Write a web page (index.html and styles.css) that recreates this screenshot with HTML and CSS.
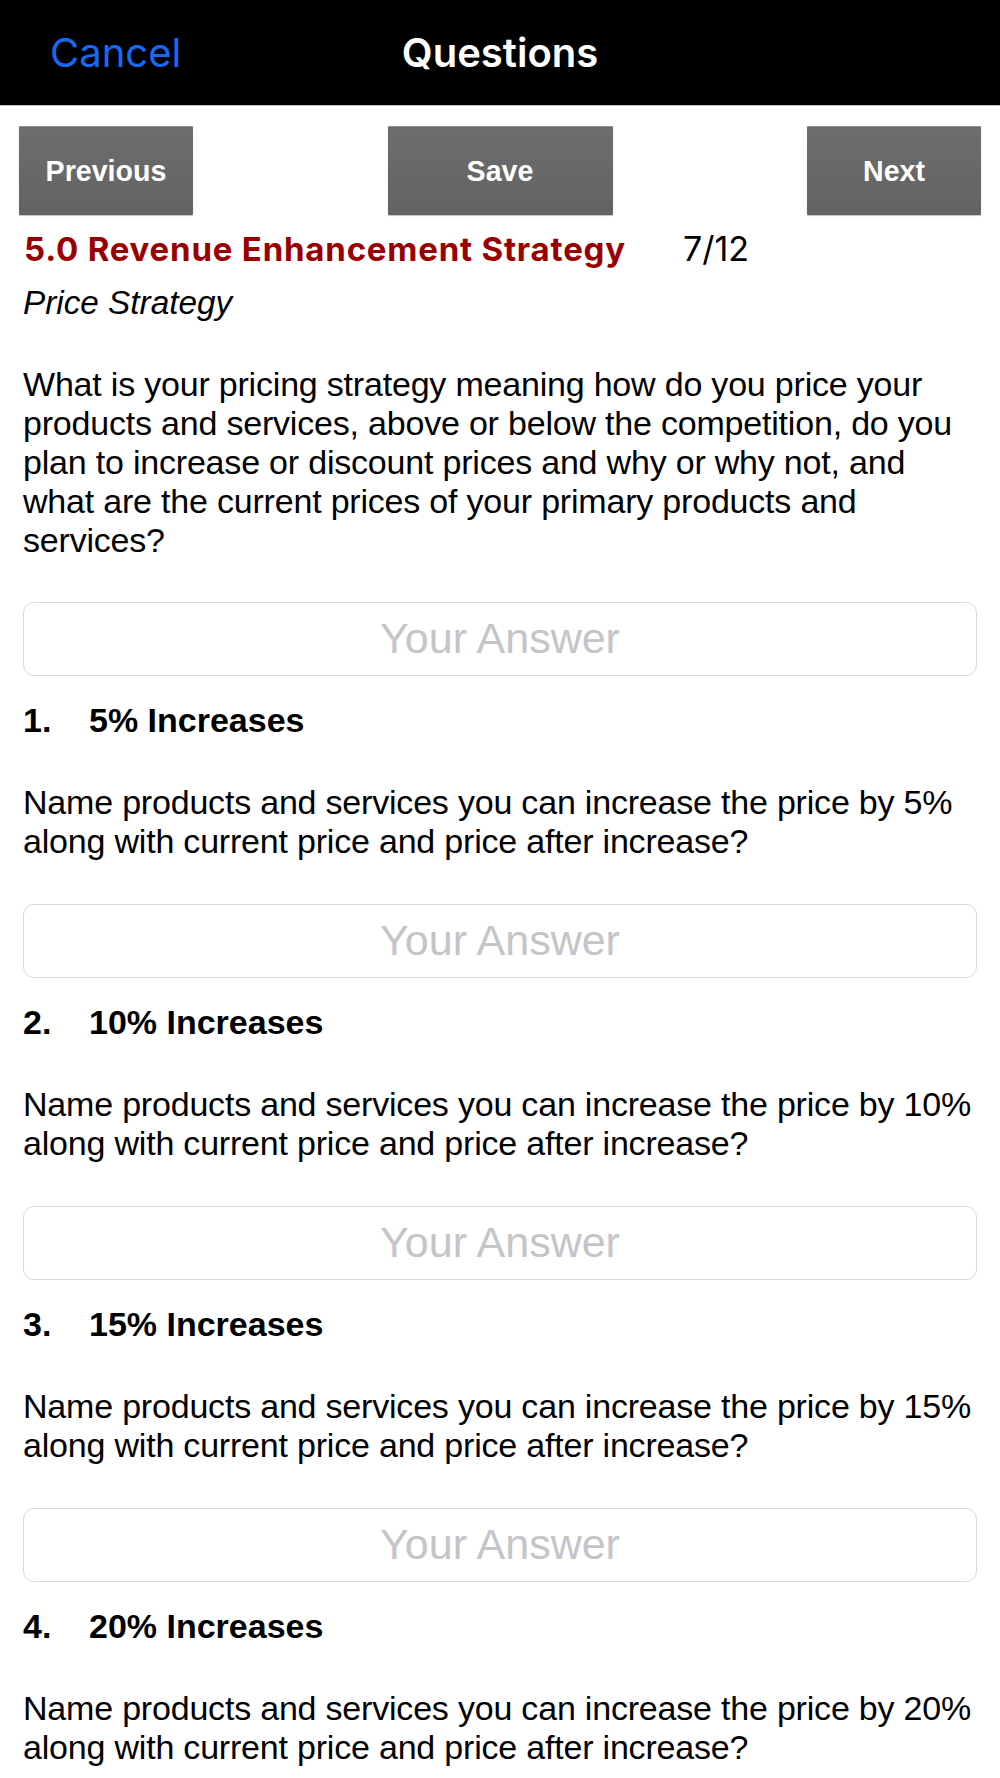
FILE: index.html
```html
<!DOCTYPE html>
<html lang="en">
<head>
<meta charset="utf-8">
<title>Questions</title>
<link rel="stylesheet" href="styles.css">
</head>
<body>
<header class="navbar">
  <a class="nav-cancel">Cancel</a>
  <h1 class="nav-title">Questions</h1>
</header>
<main class="page">
  <div class="toolbar">
    <button class="tool-btn tool-side">Previous</button>
    <button class="tool-btn tool-save">Save</button>
    <button class="tool-btn tool-side">Next</button>
  </div>
  <div class="section-row">
    <h2 class="section-title">5.0 Revenue Enhancement Strategy</h2>
    <span class="section-count">7/12</span>
  </div>
  <p class="subtitle">Price Strategy</p>
  <p class="question">What is your pricing strategy meaning how do you price your products and services, above or below the competition, do you plan to increase or discount prices and why or why not, and what are the current prices of your primary products and services?</p>
  <input class="answer" type="text" placeholder="Your Answer">

  <section class="item">
    <h3 class="item-head"><span class="item-num">1.</span>5% Increases</h3>
    <p class="item-desc">Name products and services you can increase the price by 5% along with current price and price after increase?</p>
    <input class="answer" type="text" placeholder="Your Answer">
  </section>
  <section class="item">
    <h3 class="item-head"><span class="item-num">2.</span>10% Increases</h3>
    <p class="item-desc">Name products and services you can increase the price by 10% along with current price and price after increase?</p>
    <input class="answer" type="text" placeholder="Your Answer">
  </section>
  <section class="item">
    <h3 class="item-head"><span class="item-num">3.</span>15% Increases</h3>
    <p class="item-desc">Name products and services you can increase the price by 15% along with current price and price after increase?</p>
    <input class="answer" type="text" placeholder="Your Answer">
  </section>
  <section class="item">
    <h3 class="item-head"><span class="item-num">4.</span>20% Increases</h3>
    <p class="item-desc">Name products and services you can increase the price by 20% along with current price and price after increase?</p>
    <input class="answer" type="text" placeholder="Your Answer">
  </section>
</main>
</body>
</html>
```
FILE: styles.css
```css
* { box-sizing: border-box; }

html, body {
  margin: 0;
  padding: 0;
  background: #ffffff;
}

body {
  font-family: "Liberation Sans", Arial, Helvetica, sans-serif;
  color: #000000;
  width: 1000px;
}

.navbar {
  height: 106px;
  background: #000000;
  border-bottom: 1px solid #c4c4c4;
  display: flex;
  align-items: center;
  justify-content: center;
  position: relative;
}

.nav-cancel {
  position: absolute;
  left: 50px;
  top: 0;
  line-height: 105px;
  font-family: Inter, "Liberation Sans", sans-serif;
  font-size: 40px;
  font-weight: 400;
  color: #1769f5;
}

.nav-title {
  margin: 0;
  line-height: 105px;
  font-family: Inter, "Liberation Sans", sans-serif;
  font-size: 40px;
  font-weight: 600;
  color: #ffffff;
}

.page {
  padding: 0 23px;
}

.toolbar {
  margin: 20px -4px 0;
  display: flex;
  justify-content: space-between;
}

.tool-btn {
  height: 89px;
  border: 0;
  border-top: 1px solid #909090;
  border-radius: 1px;
  background: linear-gradient(#6d6d6d, #636363);
  box-shadow: 0 1px 1px rgba(0, 0, 0, 0.25);
  color: #ffffff;
  font-family: "Liberation Sans", Arial, sans-serif;
  font-weight: 700;
  font-size: 28.6px;
  padding: 0;
}

.tool-side { width: 174px; }
.tool-save { width: 225px; }

.section-row {
  margin-top: 14px;
  display: grid;
  grid-template-columns: 660px 1fr;
  align-items: baseline;
  line-height: 40px;
}

.section-title {
  margin: 0 0 0 1px;
  font-family: Inter, "Liberation Sans", sans-serif;
  font-size: 33px;
  font-weight: 700;
  letter-spacing: 0.8px;
  color: #9b0000;
  white-space: nowrap;
}

.section-count {
  font-family: Inter, "Liberation Sans", sans-serif;
  font-size: 34px;
  font-weight: 400;
}

.subtitle {
  margin: 14px 0 0;
  font-size: 33.3px;
  font-style: italic;
  line-height: 40px;
}

.question {
  margin: 41.7px 0 0;
  font-size: 34px;
  letter-spacing: -0.2px;
  line-height: 39px;
}

.answer {
  display: block;
  width: 100%;
  height: 74px;
  margin: 42.3px 0 0;
  border: 1.5px solid #d9d9d9;
  border-radius: 11px;
  background: #ffffff;
  font-family: "Liberation Sans", Arial, sans-serif;
  font-size: 43px;
  text-align: center;
  padding: 0 10px;
  outline: none;
}

.answer::placeholder {
  color: #c4c4c9;
  opacity: 1;
}

.item-head {
  margin: 24px 0 0;
  font-size: 34px;
  font-weight: 700;
  line-height: 40px;
  display: flex;
}

.item-num {
  width: 66px;
  flex: none;
}

.item-desc {
  margin: 43px 0 0;
  font-size: 34px;
  letter-spacing: -0.2px;
  line-height: 39px;
}

.item .answer {
  margin-top: 43px;
}
```
